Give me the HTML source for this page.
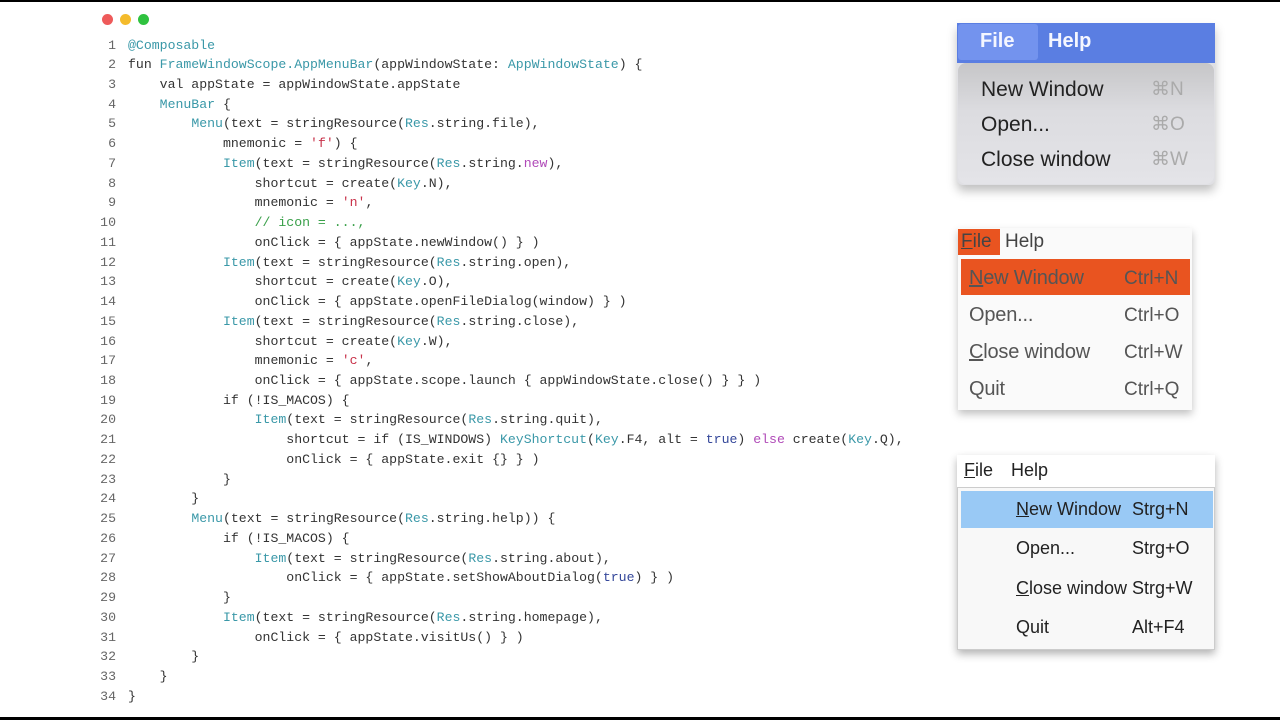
<!DOCTYPE html>
<html><head><meta charset="utf-8"><style>
body{margin:0;width:1280px;height:720px;background:#fff;position:relative;overflow:hidden;font-family:"Liberation Sans",sans-serif}
.bar{position:absolute;left:0;width:1280px;background:#000}
.dot{position:absolute;top:14px;width:11px;height:11px;border-radius:50%}
pre{position:absolute;margin:0;font-family:"Liberation Mono",monospace;font-size:13.2px;line-height:19.73px;color:#333;top:35.5px}
#ln{left:96px;width:20px;text-align:right;color:#666}
#code{left:128px}
.t{color:#3a98a8}.s{color:#c8324a}.k{color:#b04ab8}.b{color:#34479a}.c{color:#3aa04a}
.abs{position:absolute}
</style></head><body>
<div class="bar" style="top:0;height:2px"></div>
<div class="bar" style="top:717px;height:3px"></div>
<div class="dot" style="left:102px;background:#ee5a5a"></div>
<div class="dot" style="left:120px;background:#f4bb2c"></div>
<div class="dot" style="left:138px;background:#2fc23f"></div>
<pre id="ln">1
2
3
4
5
6
7
8
9
10
11
12
13
14
15
16
17
18
19
20
21
22
23
24
25
26
27
28
29
30
31
32
33
34</pre>
<pre id="code"><span class="t">@Composable</span>
fun <span class="t">FrameWindowScope.AppMenuBar</span>(appWindowState: <span class="t">AppWindowState</span>) {
    val appState = appWindowState.appState
    <span class="t">MenuBar</span> {
        <span class="t">Menu</span>(text = stringResource(<span class="t">Res</span>.string.file),
            mnemonic = <span class="s">'f'</span>) {
            <span class="t">Item</span>(text = stringResource(<span class="t">Res</span>.string.<span class="k">new</span>),
                shortcut = create(<span class="t">Key</span>.N),
                mnemonic = <span class="s">'n'</span>,
                <span class="c">// icon = ...,</span>
                onClick = { appState.newWindow() } )
            <span class="t">Item</span>(text = stringResource(<span class="t">Res</span>.string.open),
                shortcut = create(<span class="t">Key</span>.O),
                onClick = { appState.openFileDialog(window) } )
            <span class="t">Item</span>(text = stringResource(<span class="t">Res</span>.string.close),
                shortcut = create(<span class="t">Key</span>.W),
                mnemonic = <span class="s">'c'</span>,
                onClick = { appState.scope.launch { appWindowState.close() } } )
            if (!IS_MACOS) {
                <span class="t">Item</span>(text = stringResource(<span class="t">Res</span>.string.quit),
                    shortcut = if (IS_WINDOWS) <span class="t">KeyShortcut</span>(<span class="t">Key</span>.F4, alt = <span class="b">true</span>) <span class="k">else</span> create(<span class="t">Key</span>.Q),
                    onClick = { appState.exit {} } )
            }
        }
        <span class="t">Menu</span>(text = stringResource(<span class="t">Res</span>.string.help)) {
            if (!IS_MACOS) {
                <span class="t">Item</span>(text = stringResource(<span class="t">Res</span>.string.about),
                    onClick = { appState.setShowAboutDialog(<span class="b">true</span>) } )
            }
            <span class="t">Item</span>(text = stringResource(<span class="t">Res</span>.string.homepage),
                onClick = { appState.visitUs() } )
        }
    }
}</pre>

<!-- mac menu -->
<div class="abs" style="left:957px;top:23px;width:258px;height:162px;box-shadow:0 6px 10px rgba(0,0,0,.25);border-radius:0 0 6px 6px;background:#e0e0e4"></div>
<div class="abs" style="left:957px;top:23px;width:258px;height:40px;background:#5a7ee2"></div>
<div class="abs" style="left:958px;top:24px;width:80px;height:36px;background:#7393ee;border-radius:3px"></div>
<div class="abs" style="left:980px;top:30px;font-size:20px;font-weight:bold;color:#f4f6ff">File</div>
<div class="abs" style="left:1048px;top:30px;font-size:20px;font-weight:bold;color:#f4f6ff">Help</div>
<div class="abs" style="left:958px;top:63px;width:256px;height:121px;border-radius:8px;background:linear-gradient(#c6c6c8,#dcdce0 40%,#e4e4e8)"></div>
<div class="abs" style="left:981px;top:78px;font-size:21px;color:#222;line-height:24px">New Window<br><div style="height:11px"></div>Open...<br><div style="height:11px"></div>Close window</div>
<div class="abs" style="left:1151px;top:78px;font-size:19px;color:#aaa;line-height:24px">⌘N<br><div style="height:11px"></div>⌘O<br><div style="height:11px"></div>⌘W</div>

<!-- ubuntu menu -->
<div class="abs" style="left:958px;top:228px;width:234px;height:182px;background:#fafafa;box-shadow:0 4px 8px rgba(0,0,0,.25)"></div>
<div class="abs" style="left:958px;top:229px;width:42px;height:26px;background:#e95420"></div>
<div class="abs" style="left:961px;top:259px;width:229px;height:36px;background:#e95420"></div>
<div class="abs" style="left:961px;top:231px;font-size:19px;color:#444"><u>F</u>ile</div>
<div class="abs" style="left:1005px;top:231px;font-size:19px;color:#444">Help</div>
<div class="abs" style="left:969px;top:267px;font-size:20px;color:#555;line-height:37px;margin-top:-7px;letter-spacing:-0.2px"><u>N</u>ew Window<br>Open...<br><u>C</u>lose window<br>Quit</div>
<div class="abs" style="left:1124px;top:267px;font-size:19px;color:#555;line-height:37px;margin-top:-7px">Ctrl+N<br>Ctrl+O<br>Ctrl+W<br>Ctrl+Q</div>

<!-- windows menu -->
<div class="abs" style="left:957px;top:455px;width:258px;height:195px;background:#fff;box-shadow:0 4px 8px rgba(0,0,0,.3)"></div>
<div class="abs" style="left:957px;top:487px;width:256px;height:161px;border:1px solid #ccc;background:#f8f8f8"></div>
<div class="abs" style="left:961px;top:491px;width:252px;height:37px;background:#99c9f5"></div>
<div class="abs" style="left:964px;top:460px;font-size:18px;color:#222"><u>F</u>ile</div>
<div class="abs" style="left:1011px;top:460px;font-size:18px;color:#222">Help</div>
<div class="abs" style="left:1016px;top:490px;font-size:18px;color:#222;line-height:39.3px"><u>N</u>ew Window<br>Open...<br><u>C</u>lose window<br>Quit</div>
<div class="abs" style="left:1132px;top:490px;font-size:18px;color:#222;line-height:39.3px">Strg+N<br>Strg+O<br>Strg+W<br>Alt+F4</div>
</body></html>
